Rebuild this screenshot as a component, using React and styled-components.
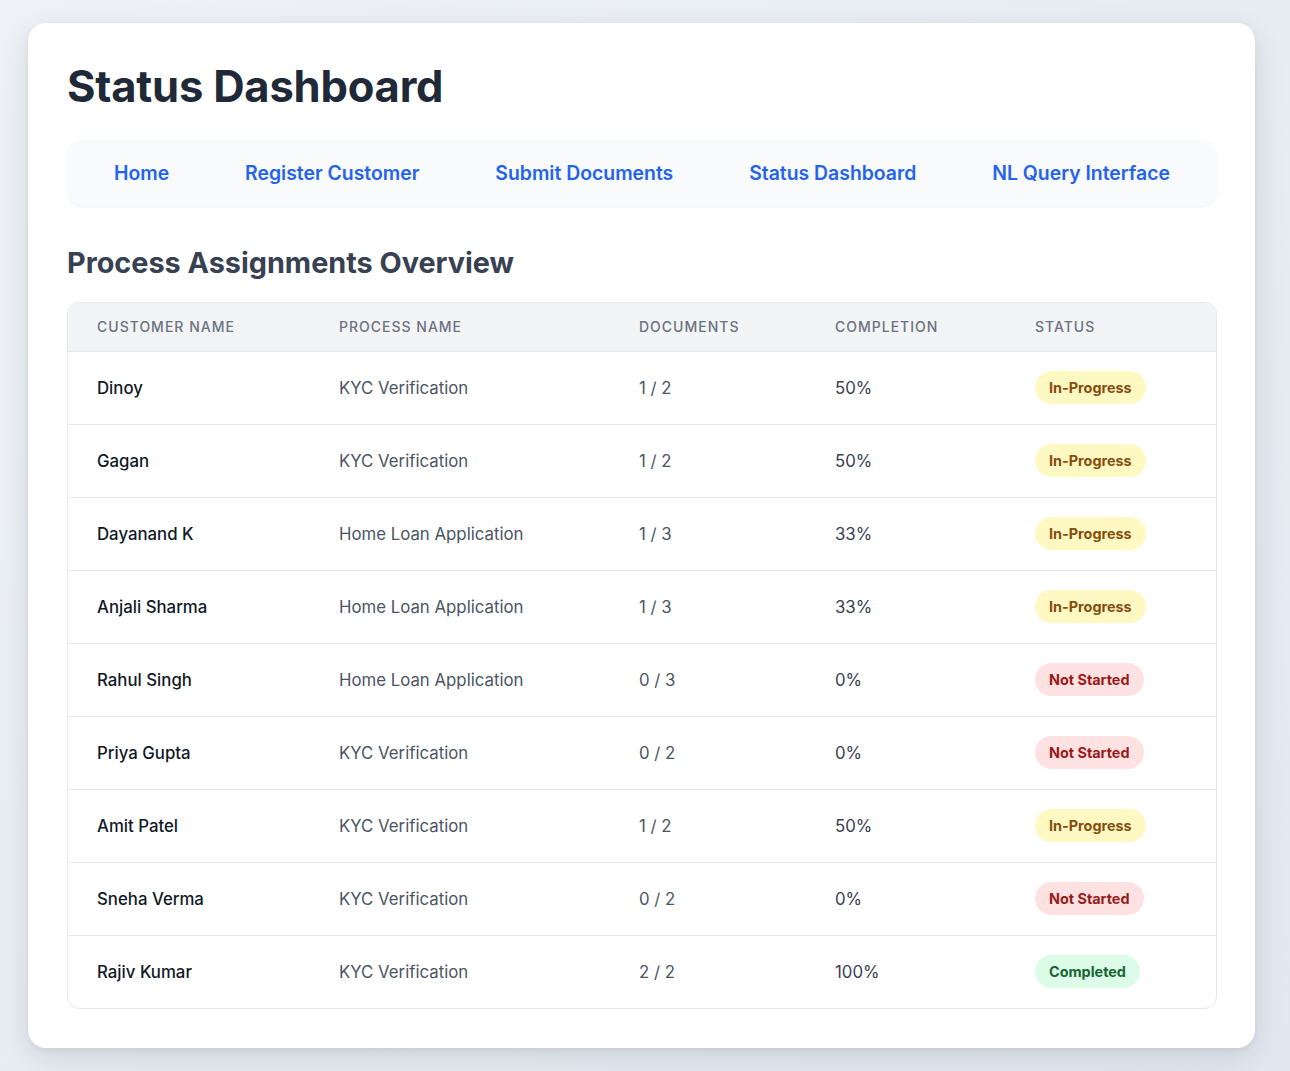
import React from "react";
import styled, { createGlobalStyle } from "styled-components";

const GlobalStyle = createGlobalStyle`
    * {
        box-sizing: border-box;
    }
    body {
        margin: 0;
        font-family: "Inter", "Noto Sans", sans-serif;
        background: linear-gradient(135deg, #eef2f6 0%, #e2e8f0 100%);
        min-height: 100vh;
    }
`;

const rows = [
    { name: "Dinoy", process: "KYC Verification", docs: "1 / 2", completion: "50%", status: "In-Progress" },
    { name: "Gagan", process: "KYC Verification", docs: "1 / 2", completion: "50%", status: "In-Progress" },
    { name: "Dayanand K", process: "Home Loan Application", docs: "1 / 3", completion: "33%", status: "In-Progress" },
    { name: "Anjali Sharma", process: "Home Loan Application", docs: "1 / 3", completion: "33%", status: "In-Progress" },
    { name: "Rahul Singh", process: "Home Loan Application", docs: "0 / 3", completion: "0%", status: "Not Started" },
    { name: "Priya Gupta", process: "KYC Verification", docs: "0 / 2", completion: "0%", status: "Not Started" },
    { name: "Amit Patel", process: "KYC Verification", docs: "1 / 2", completion: "50%", status: "In-Progress" },
    { name: "Sneha Verma", process: "KYC Verification", docs: "0 / 2", completion: "0%", status: "Not Started" },
    { name: "Rajiv Kumar", process: "KYC Verification", docs: "2 / 2", completion: "100%", status: "Completed" },
];

const statusColors = {
    "In-Progress": { bg: "#fef9c3", fg: "#854d0e" },
    "Not Started": { bg: "#fee2e2", fg: "#991b1b" },
    Completed: { bg: "#dcfce7", fg: "#166534" },
};

const Page = styled.div`
    padding: 23px 35px 24px 28px;
`;

const Card = styled.div`
    background: #ffffff;
    border-radius: 18px;
    box-shadow: 0 10px 30px rgba(15, 23, 42, 0.12), 0 2px 6px rgba(15, 23, 42, 0.05);
    padding: 36px 38px 39px 39px;
`;

const Title = styled.h1`
    margin: 0 0 27px;
    font-size: 43.5px;
    font-weight: 700;
    line-height: 54px;
    color: #1f2937;
    letter-spacing: -0.2px;
`;

const Nav = styled.nav`
    display: flex;
    justify-content: space-between;
    align-items: center;
    height: 66px;
    padding: 0 47px;
    background: #f8fafc;
    border-radius: 16px;
    box-shadow: 0 1px 3px rgba(15, 23, 42, 0.06);
`;

const NavLink = styled.a`
    color: #2563eb;
    font-size: 19.4px;
    font-weight: 600;
    text-decoration: none;
    cursor: pointer;
`;

const Subtitle = styled.h2`
    margin: 37px 0 19px;
    font-size: 28.8px;
    font-weight: 700;
    line-height: 40px;
    color: #374151;
`;

const TableWrap = styled.div`
    border: 1px solid #e5e7eb;
    border-radius: 12px;
    overflow: hidden;
`;

const Table = styled.table`
    width: 100%;
    border-collapse: collapse;
    table-layout: fixed;
`;

const HeadCell = styled.th`
    width: ${(p) => p.$w};
    height: 48px;
    padding: 0 0 0 29px;
    background: #f3f4f6;
    border-bottom: 1px solid #e5e7eb;
    text-align: left;
    font-size: 14px;
    font-weight: 500;
    letter-spacing: 1px;
    text-transform: uppercase;
    color: #6b7280;
`;

const Row = styled.tr`
    & + & td {
        border-top: 1px solid #e5e7eb;
    }
`;

const Cell = styled.td`
    height: 73px;
    padding: 0 0 0 29px;
    font-size: 16.8px;
    color: ${(p) => p.$color || "#4b5563"};
    font-weight: ${(p) => (p.$strong ? 500 : 400)};
`;

const Badge = styled.span`
    display: inline-block;
    padding: 0 14px;
    height: 33px;
    line-height: 33px;
    border-radius: 999px;
    font-size: 14.4px;
    font-weight: 700;
    background: ${(p) => statusColors[p.$status].bg};
    color: ${(p) => statusColors[p.$status].fg};
`;

const App = () => {
    return (
        <>
            <GlobalStyle />
            <Page>
                <Card>
                    <Title>Status Dashboard</Title>
                    <Nav>
                        <NavLink>Home</NavLink>
                        <NavLink>Register Customer</NavLink>
                        <NavLink>Submit Documents</NavLink>
                        <NavLink>Status Dashboard</NavLink>
                        <NavLink>NL Query Interface</NavLink>
                    </Nav>
                    <Subtitle>Process Assignments Overview</Subtitle>
                    <TableWrap>
                        <Table>
                            <thead>
                                <tr>
                                    <HeadCell $w="242px">Customer Name</HeadCell>
                                    <HeadCell $w="300px">Process Name</HeadCell>
                                    <HeadCell $w="196px">Documents</HeadCell>
                                    <HeadCell $w="200px">Completion</HeadCell>
                                    <HeadCell $w="auto">Status</HeadCell>
                                </tr>
                            </thead>
                            <tbody>
                                {rows.map((r) => (
                                    <Row key={r.name}>
                                        <Cell $color="#111827" $strong>{r.name}</Cell>
                                        <Cell>{r.process}</Cell>
                                        <Cell>{r.docs}</Cell>
                                        <Cell $color="#374151">{r.completion}</Cell>
                                        <Cell>
                                            <Badge $status={r.status}>{r.status}</Badge>
                                        </Cell>
                                    </Row>
                                ))}
                            </tbody>
                        </Table>
                    </TableWrap>
                </Card>
            </Page>
        </>
    );
};

export default App;
